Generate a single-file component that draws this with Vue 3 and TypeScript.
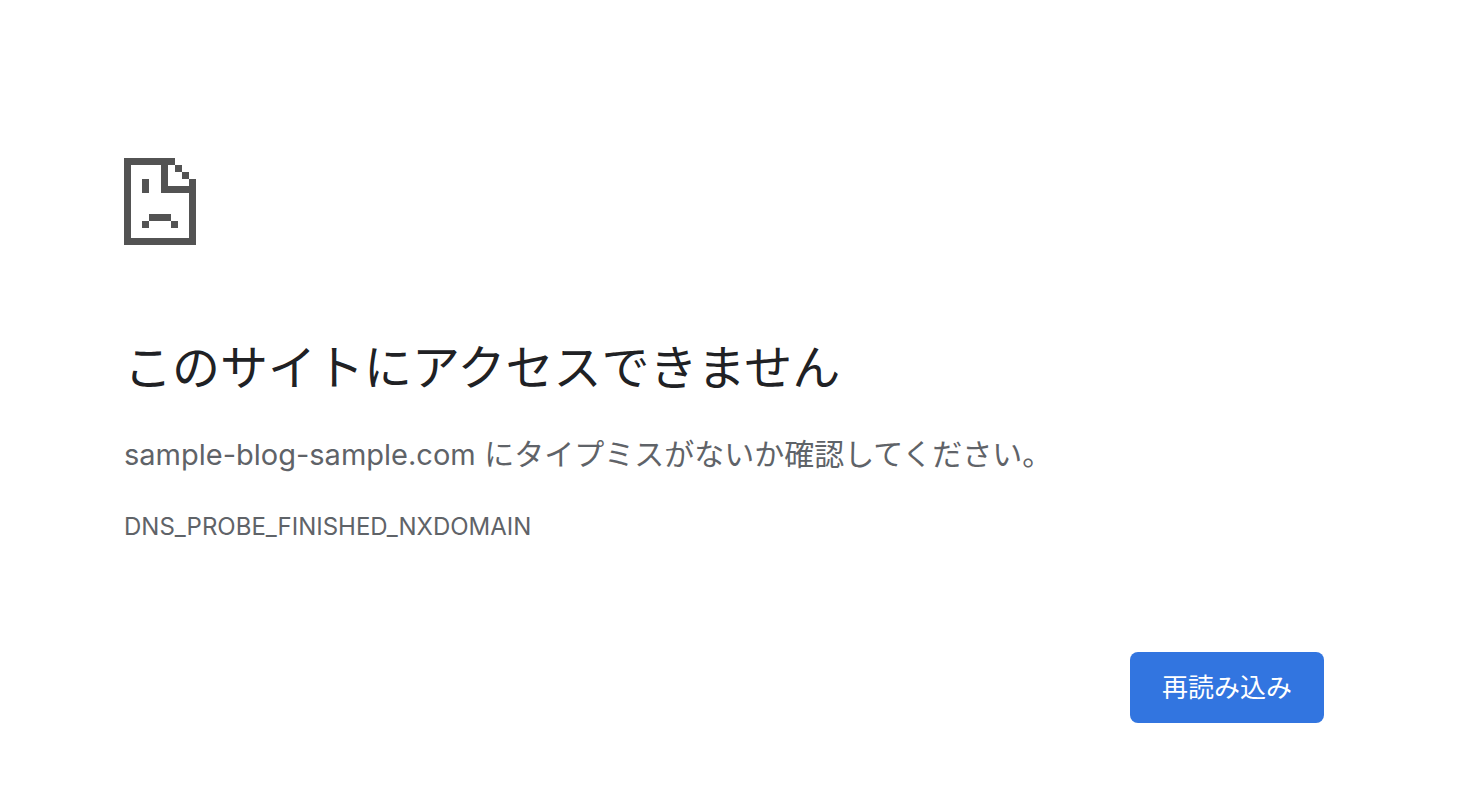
<script setup lang="ts">
const host = 'sample-blog-sample.com'
const errorCode = 'DNS_PROBE_FINISHED_NXDOMAIN'

function reload(): void {
  window.location.reload()
}
</script>

<template>
  <main class="error-page">
    <svg class="icon" viewBox="0 0 72 87" shape-rendering="crispEdges" aria-hidden="true">
      <path
        fill="#535353"
        fill-rule="evenodd"
        d="M0 0H51V7H58V14H65V21H72V87H0ZM7 7V80H65V35H37V7ZM44 7V28H65V21H58V14H51V7Z"
      />
      <path fill="#535353" d="M18 21h7v14h-7zM25 56h22v7h-22zM18 63h7v7h-7zM47 63h7v7h-7z" />
    </svg>
    <h1 class="title">このサイトにアクセスできません</h1>
    <p class="summary"><span class="host">{{ host }}</span> にタイプミスがないか確認してください。</p>
    <p class="code">{{ errorCode }}</p>
    <div class="actions">
      <button class="reload" type="button" @click="reload">再読み込み</button>
    </div>
  </main>
</template>

<style>
body {
  margin: 0;
  background: #fff;
}
</style>

<style scoped>
.error-page {
  box-sizing: border-box;
  padding: 158px 150px 84px 124px;
  color: #5f6368;
  font-family: Inter, "Noto Sans CJK JP", sans-serif;
}

.icon {
  display: block;
  width: 72px;
  height: 87px;
}

.title {
  margin: 94px 0 0;
  color: #202124;
  font-size: 48px;
  font-weight: 400;
  line-height: 58px;
}

.summary {
  margin: 33px 0 0;
  font-size: 30px;
  line-height: 48px;
}

.host {
  font-size: 29px;
}

.code {
  margin: 24px 0 0;
  font-size: 24px;
  line-height: 48px;
}

.actions {
  display: flex;
  justify-content: flex-end;
  margin-top: 101px;
}

.reload {
  padding: 16px 32px;
  border: 0;
  border-radius: 8px;
  background: #3275e0;
  color: #fff;
  font-family: inherit;
  font-size: 26px;
  line-height: 39px;
  cursor: pointer;
}
</style>
